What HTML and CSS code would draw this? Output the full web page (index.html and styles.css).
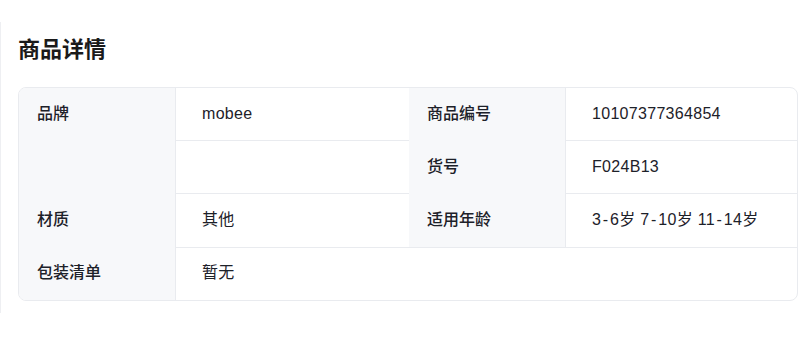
FILE: index.html
```html
<!DOCTYPE html>
<html lang="zh">
<head>
<meta charset="utf-8">
<title>商品详情</title>
<link rel="stylesheet" href="styles.css">
</head>
<body>
<section class="panel">
  <h2 class="panel-title">商品详情</h2>
  <div class="desc">
    <div class="cell label span2">品牌</div>
    <div class="cell value line-left line-bottom">mobee</div>
    <div class="cell label">商品编号</div>
    <div class="cell value line-left line-bottom">10107377364854</div>

    <div class="cell value line-left line-bottom"></div>
    <div class="cell label">货号</div>
    <div class="cell value line-left line-bottom">F024B13</div>

    <div class="cell label">材质</div>
    <div class="cell value line-left">其他</div>
    <div class="cell label">适用年龄</div>
    <div class="cell value line-left">3<span class="dash">-</span>6岁 7<span class="dash">-</span>10岁 11<span class="dash">-</span>14岁</div>

    <div class="cell label">包装清单</div>
    <div class="cell value line-left line-top wide">暂无</div>
  </div>
</section>
</body>
</html>
```

FILE: styles.css
```css
* { box-sizing: border-box; }

html, body {
  margin: 0;
  padding: 0;
  background: #ffffff;
}

body {
  font-family: "Liberation Sans", "Noto Sans CJK SC", sans-serif;
  color: #1d2129;
}

.panel {
  margin-top: 22px;
  height: 291px;
  border-left: 1px solid #eeeff2;
  padding: 13px 8px 0 17px;
}

.panel-title {
  margin: 0 0 22px 0;
  font-size: 22px;
  line-height: 30px;
  font-weight: 600;
  color: #1a1a1a;
}

.desc {
  display: grid;
  grid-template-columns: 156px 234px 156px 232px;
  grid-template-rows: repeat(4, 53px);
  border: 1px solid #e9ebef;
  border-radius: 8px;
  overflow: hidden;
  font-size: 16px;
  line-height: 22px;
}

.cell {
  padding: 15px 18px 0 18px;
  white-space: nowrap;
}

.label {
  background: #f7f8fa;
  font-weight: 500;
  color: #1d2129;
}

.value {
  padding-left: 26px;
  letter-spacing: 0.3px;
  color: #1d2129;
}

.dash {
  padding: 0 1.6px;
}

.span2 { grid-row: span 2; }
.wide { grid-column: span 3; }

.line-left { border-left: 1px solid #e9ebef; }
.line-bottom { border-bottom: 1px solid #e9ebef; }
.line-top { border-top: 1px solid #e9ebef; padding-top: 14px; }
```
